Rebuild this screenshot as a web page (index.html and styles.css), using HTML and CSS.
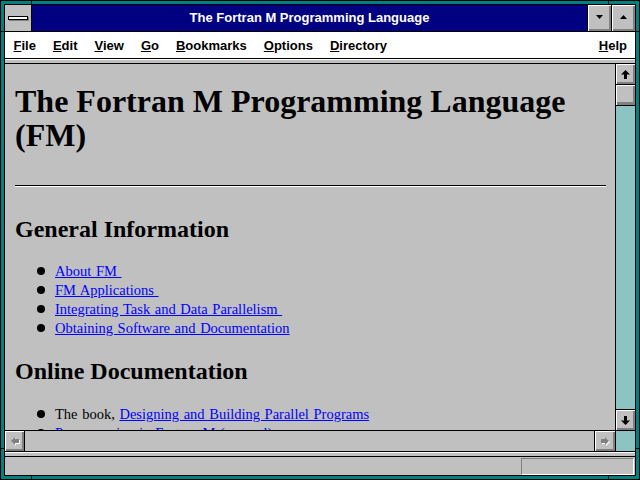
FILE: index.html
```html
<!DOCTYPE html>
<html>
<head>
<meta charset="utf-8">
<title>The Fortran M Programming Language</title>
<link rel="stylesheet" href="styles.css">
</head>
<body>
<div class="frame">
  <div class="window">
    <div class="titlebar">
      <div class="sysbox"><span class="sysbar"></span></div>
      <div class="title">The Fortran M Programming Language</div>
      <div class="tbtn"><svg width="7" height="4" viewBox="0 0 7 4"><path d="M0 0H7L3.5 4Z" fill="#000"/></svg></div>
      <div class="tbtn"><svg width="7" height="4" viewBox="0 0 7 4"><path d="M0 4H7L3.5 0Z" fill="#000"/></svg></div>
    </div>
    <div class="menubar">
      <span class="mi"><u>F</u>ile</span>
      <span class="mi"><u>E</u>dit</span>
      <span class="mi"><u>V</u>iew</span>
      <span class="mi"><u>G</u>o</span>
      <span class="mi"><u>B</u>ookmarks</span>
      <span class="mi"><u>O</u>ptions</span>
      <span class="mi"><u>D</u>irectory</span>
      <span class="mi help"><u>H</u>elp</span>
    </div>
    <div class="toolstrip"></div>
    <div class="main">
      <div class="content">
        <h1>The Fortran M Programming Language (FM)</h1>
        <hr>
        <h2>General Information</h2>
        <ul>
          <li><a href="#">About FM&nbsp;</a></li>
          <li><a href="#">FM Applications&nbsp;</a></li>
          <li><a href="#">Integrating Task and Data Parallelism&nbsp;</a></li>
          <li><a href="#">Obtaining Software and Documentation</a></li>
        </ul>
        <h2 class="second">Online Documentation</h2>
        <ul class="docs">
          <li>The book, <a href="#">Designing and Building Parallel Programs</a></li>
          <li><a href="#">Programming in Fortran M (manual)</a></li>
        </ul>
      </div>
      <div class="vscroll">
        <div class="sbtn up"><svg width="9" height="9" viewBox="0 0 9 9"><path d="M4.5 0L9 4.5H6V9H3V4.5H0Z" fill="#000"/></svg></div>
        <div class="thumb"></div>
        <div class="track"></div>
        <div class="sbtn down"><svg width="9" height="9" viewBox="0 0 9 9"><path d="M4.5 9L9 4.5H6V0H3V4.5H0Z" fill="#000"/></svg></div>
      </div>
    </div>
    <div class="hscroll">
      <div class="sbtn left"><svg width="10" height="10" viewBox="0 0 10 10"><path d="M1 5L5 1V3H9V7H5V9Z" fill="#fff" transform="translate(1 1)"/><path d="M1 5L5 1V3H9V7H5V9Z" fill="#808080"/></svg></div>
      <div class="htrack"></div>
      <div class="sbtn right"><svg width="10" height="10" viewBox="0 0 10 10"><path d="M9 5L5 1V3H1V7H5V9Z" fill="#fff" transform="translate(1 1)"/><path d="M9 5L5 1V3H1V7H5V9Z" fill="#808080"/></svg></div>
      <div class="corner"></div>
    </div>
    <div class="statusstrip"></div>
    <div class="status"><div class="statusbox"></div></div>
  </div>
</div>
</body>
</html>
```
FILE: styles.css
```css
html, body {
  margin: 0;
  padding: 0;
}
body {
  width: 640px;
  height: 480px;
  overflow: hidden;
  background: #008080;
}
.frame {
  box-sizing: border-box;
  width: 640px;
  height: 480px;
  border: 1px solid #000;
  padding: 3px;
  background:
    linear-gradient(#000, #000) 30px 0 / 1px 100% no-repeat,
    linear-gradient(#000, #000) 607px 0 / 1px 100% no-repeat,
    linear-gradient(#000, #000) 0 30px / 100% 1px no-repeat,
    linear-gradient(#000, #000) 0 447px / 100% 1px no-repeat,
    #008080;
}
.window {
  box-sizing: border-box;
  height: 100%;
  border: 1px solid #000;
  background: #c0c0c0;
  display: flex;
  flex-direction: column;
  font-family: "Liberation Sans", Arial, sans-serif;
}
.titlebar {
  flex: none;
  height: 26px;
  display: flex;
  background: #000080;
  border-bottom: 1px solid #000;
}
.sysbox {
  width: 26px;
  background: #c0c0c0;
  border-right: 1px solid #000;
  display: flex;
  align-items: center;
  justify-content: center;
}
.sysbar {
  display: block;
  width: 18px;
  height: 2px;
  background: #fff;
  border: 1px solid #000;
  box-shadow: 1px 1px 0 #808080;
  margin-top: -1px;
}
.title {
  flex: 1;
  text-align: center;
  color: #fff;
  font-weight: bold;
  font-size: 13px;
  line-height: 26px;
}
.tbtn {
  width: 24px;
  border-left: 1px solid #000;
  background: #c0c0c0;
  box-shadow: inset 1px 1px #fff, inset -1px -1px #808080, inset -2px -2px #808080;
  display: flex;
  align-items: center;
  justify-content: center;
  padding-bottom: 2px;
  box-sizing: border-box;
}
.tbtn svg { display: block; }
.menubar {
  flex: none;
  height: 26px;
  display: flex;
  align-items: center;
  background: #fff;
  border-bottom: 1px solid #000;
  font-size: 13px;
  font-weight: bold;
  color: #000;
}
.mi {
  padding: 0 8.5px;
}
.mi u {
  text-decoration-thickness: 1px;
}
.help {
  margin-left: auto;
  padding-right: 8px;
}
.toolstrip {
  flex: none;
  height: 4px;
  background: #c0c0c0;
  box-shadow: inset 0 1px #fff;
  border-bottom: 1px solid #000;
}
.main {
  flex: 1;
  min-height: 0;
  display: flex;
}
.content {
  flex: 1;
  min-width: 0;
  overflow: hidden;
  padding: 0 9px 0 10px;
  font-family: "Liberation Serif", "Times New Roman", serif;
  color: #000;
}
h1 {
  margin: 20px 0 0;
  font-size: 32px;
  line-height: 34px;
  font-weight: bold;
}
hr {
  margin: 33px 0 0;
  height: 0;
  border: 0;
  border-top: 1px solid #000;
  border-bottom: 1px solid #fff;
}
h2 {
  margin: 28px 0 0;
  font-size: 24px;
  line-height: 28px;
  font-weight: bold;
}
h2.second {
  margin-top: 19px;
}
ul {
  list-style: none;
  margin: 19px 0 0;
  padding: 0 0 0 22px;
  font-size: 14.5px;
  line-height: 19px;
  word-spacing: 1px;
}
ul.docs {
  margin-top: 20px;
}
li::before {
  content: "";
  display: inline-block;
  width: 8px;
  height: 8px;
  border-radius: 50%;
  background: #000;
  margin-right: 10px;
  vertical-align: 1px;
}
a {
  color: #0000ff;
  text-decoration: underline;
}
.vscroll {
  flex: none;
  width: 19px;
  border-left: 1px solid #000;
  display: flex;
  flex-direction: column;
}
.sbtn {
  box-sizing: border-box;
  background: #c0c0c0;
  box-shadow: inset 1px 1px #fff, inset -1px -1px #808080, inset -2px -2px #808080;
  display: flex;
  align-items: center;
  justify-content: center;
  flex: none;
}
.sbtn svg { display: block; }
.sbtn.up {
  height: 21px;
  border-bottom: 1px solid #000;
}
.sbtn.down {
  height: 21px;
  border-top: 1px solid #000;
}
.thumb {
  flex: none;
  box-sizing: border-box;
  height: 21px;
  background: #c0c0c0;
  border-bottom: 1px solid #000;
  box-shadow: inset 1px 1px #fff, inset -1px -2px #808080, inset -2px -3px #808080;
}
.track, .corner {
  background-color: #8cc4c4;
}
.track {
  flex: 1;
}
.hscroll {
  flex: none;
  height: 20px;
  border-top: 1px solid #000;
  display: flex;
}
.sbtn.left {
  width: 20px;
  border-right: 1px solid #000;
}
.htrack {
  flex: 1;
  background: #c0c0c0;
}
.sbtn.right {
  width: 21px;
  border-left: 1px solid #000;
}
.corner {
  flex: none;
  width: 19px;
  border-left: 1px solid #000;
}
.statusstrip {
  flex: none;
  height: 4px;
  border-top: 1px solid #000;
  border-bottom: 1px solid #000;
  background: #c0c0c0;
  box-shadow: inset 0 1px #fff;
}
.status {
  flex: none;
  height: 18px;
  display: flex;
  justify-content: flex-end;
  align-items: flex-start;
}
.statusbox {
  box-sizing: border-box;
  width: 113px;
  height: 17px;
  margin: 1px 1px 0 0;
  border-top: 1px solid #808080;
  border-left: 1px solid #808080;
  border-bottom: 1px solid #fff;
  border-right: 1px solid #fff;
}
```
